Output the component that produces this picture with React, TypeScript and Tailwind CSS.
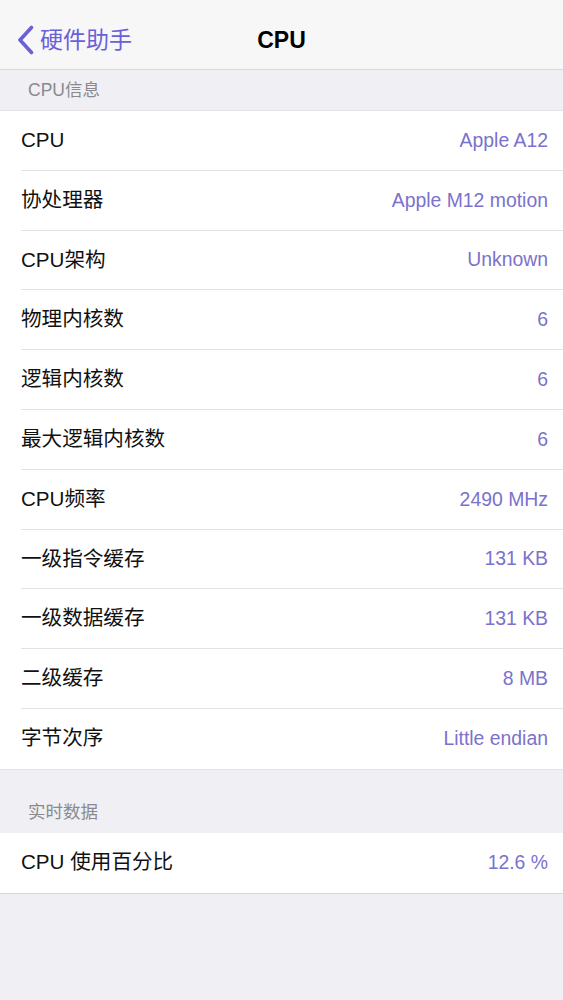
const cpuInfo = [
  { label: "CPU", value: "Apple A12" },
  { label: "协处理器", value: "Apple M12 motion" },
  { label: "CPU架构", value: "Unknown" },
  { label: "物理内核数", value: "6" },
  { label: "逻辑内核数", value: "6" },
  { label: "最大逻辑内核数", value: "6" },
  { label: "CPU频率", value: "2490 MHz" },
  { label: "一级指令缓存", value: "131 KB" },
  { label: "一级数据缓存", value: "131 KB" },
  { label: "二级缓存", value: "8 MB" },
  { label: "字节次序", value: "Little endian" },
];

const font = "font-['Liberation_Sans','Noto_Sans_CJK_SC',sans-serif]";

function Row({ label, value, last }: { label: string; value: string; last?: boolean }) {
  return (
    <div className="flex h-[59.8px] pl-[21px]">
      <div
        className={`flex flex-1 items-center justify-between pr-[15px] ${
          last ? "" : "border-b border-[#e2e2e6]"
        }`}
      >
        <span className="text-[20.6px] text-[#111]">{label}</span>
        <span className="text-[19.4px] text-[#7a72cc]">{value}</span>
      </div>
    </div>
  );
}

export default function App() {
  return (
    <div className={`min-h-[1000px] w-full bg-[#efeff4] ${font}`}>
      {/* NAV */}
      <header className="relative flex h-[70px] items-center border-b border-[#d8d8dc] bg-[#f7f7f8] pt-[11px]">
        <div className="flex items-center gap-[5px] pl-[16px] text-[#6a60d8]">
          <svg width="19" height="30" viewBox="0 0 19 30" fill="none">
            <path d="M15.5 2.5 L4 15 L15.5 27.5" stroke="currentColor" strokeWidth="3.6" strokeLinecap="round" strokeLinejoin="round" />
          </svg>
          <span className="text-[23px]">硬件助手</span>
        </div>
        <h1 className="absolute left-1/2 -translate-x-1/2 text-[23px] font-bold text-black">CPU</h1>
      </header>

      {/* CPU INFO */}
      <div className="flex h-[40px] items-center pl-[28px] text-[17.5px] text-[#8a8a8e]">CPU信息</div>
      <section className="border-y border-[#e2e2e6] bg-white">
        {cpuInfo.map((item, i) => (
          <Row key={item.label} label={item.label} value={item.value} last={i === cpuInfo.length - 1} />
        ))}
      </section>

      {/* REALTIME */}
      <div className="flex h-[63px] items-end pb-[8px] pl-[28px] text-[17.5px] text-[#8a8a8e]">实时数据</div>
      <section className="border-b border-[#d8d8dc] bg-white">
        <Row label="CPU 使用百分比" value="12.6 %" last />
      </section>
    </div>
  );
}
